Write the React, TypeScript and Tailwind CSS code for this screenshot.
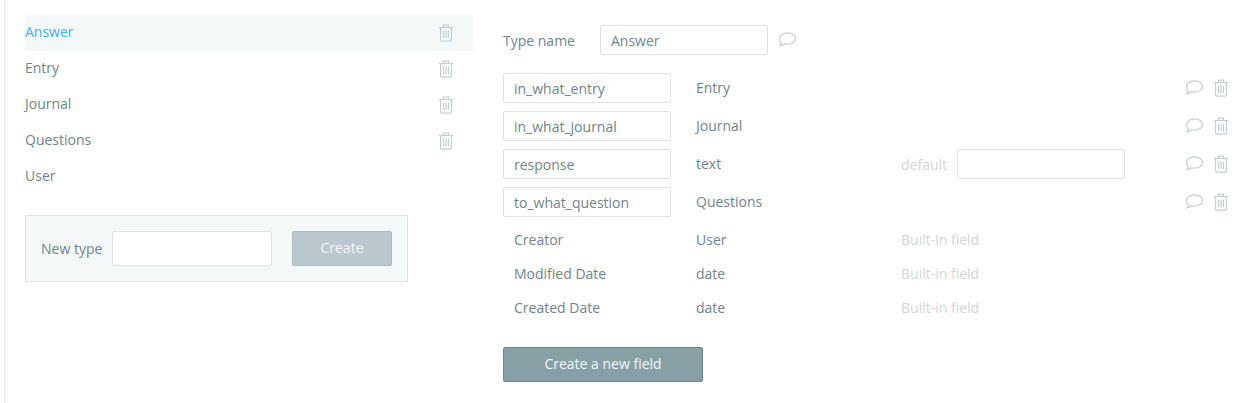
import React from "react";

const TrashIcon = () => (
	<svg width="16" height="18" viewBox="0 0 16 18" fill="none" stroke="#c2d0d5" strokeWidth="1.2" className="block">
		<path d="M1 3.5h14" />
		<path d="M5.5 3.5V1.2h5v2.3" />
		<path d="M2.6 3.5v12.2c0 .9.5 1.4 1.4 1.4h8c.9 0 1.4-.5 1.4-1.4V3.5" />
		<path d="M5.6 6.5v7.5M8 6.5v7.5M10.4 6.5v7.5" />
	</svg>
);

const BubbleIcon = () => (
	<svg width="18" height="16" viewBox="0 0 18 16" fill="none" stroke="#c2d0d5" strokeWidth="1.2" className="block">
		<path d="M9.500 .8c4.400 0 8 2.400 8 5.700s-3.600 5.700-8 5.700c-1 0-2-.1-2.900-.4-1.200 1.100-2.800 1.900-4.700 2.200.7-.8 1.200-1.800 1.300-3.100C1.900 10 1.500 8.300 1.500 6.500c0-3.300 3.600-5.700 8-5.700z" />
	</svg>
);

const FieldInput = ({ value }: { value: string }) => (
	<input
		readOnly
		value={value}
		className="h-[30px] w-[168px] shrink-0 rounded-[2px] border border-[#dde2e4] bg-white px-[10px] text-[14px] text-[#71838a] outline-none"
	/>
);

const types = ["Answer", "Entry", "Journal", "Questions", "User"];

const fields = [
	{ name: "in_what_entry", type: "Entry" },
	{ name: "in_what_journal", type: "Journal" },
	{ name: "response", type: "text", hasDefault: true },
	{ name: "to_what_question", type: "Questions" },
];

const builtIns = [
	{ name: "Creator", type: "User" },
	{ name: "Modified Date", type: "date" },
	{ name: "Created Date", type: "date" },
];

export default function App() {
	return (
		<div className="h-[403px] w-[1255px] overflow-hidden bg-white font-['Open_Sans',sans-serif] text-[14px] text-[#71838a]">
			<div className="ml-[4px] flex h-full border-l border-[#e6e9eb] pl-[20px]">
				<aside className="w-[448px] shrink-0 pt-[15px]">
					{types.map((t, i) => (
						<div
							key={t}
							className={`flex h-[36px] items-center justify-between pr-[19px] ${i === 0 ? "bg-[#f5f8f9] text-[#3fb1e6]" : ""}`}
						>
							<span className="-mt-[4px]">{t}</span>
							{t !== "User" && <TrashIcon />}
						</div>
					))}
					<div className="mt-[20px] flex h-[67px] w-[383px] items-center border border-[#dfe3e5] bg-[#f5f8f9] pl-[15px]">
						<span className="w-[71px]">New type</span>
						<input className="h-[35px] w-[160px] rounded-[2px] border border-[#dfe3e5] bg-white outline-none" />
						<button className="ml-[20px] h-[35px] w-[100px] rounded-[2px] border border-[#aebbc1] bg-[#bac7cc] pb-[2px] text-center text-white/80">
							Create
						</button>
					</div>
				</aside>

				<main className="ml-[30px] flex-1 pt-[25px]">
					<div className="flex items-center">
						<span className="w-[97px]">Type name</span>
						<FieldInput value="Answer" />
						<span className="ml-[10px]">
							<BubbleIcon />
						</span>
					</div>

					<div className="mt-[18px] flex flex-col gap-[8px]">
						{fields.map((f) => (
							<div key={f.name} className="flex h-[30px] items-center">
								<FieldInput value={f.name} />
								<span className="ml-[25px] -mt-[2px] w-[205px] shrink-0">{f.type}</span>
								{f.hasDefault && (
									<>
										<span className="w-[56px] shrink-0 text-[#d0d6d9]">default</span>
										<FieldInput value="" />
									</>
								)}
								<div className="ml-auto mr-[26px] flex items-center gap-[10px]">
									<BubbleIcon />
									<TrashIcon />
								</div>
							</div>
						))}
					</div>

					<div className="mt-[5px]">
						{builtIns.map((b) => (
							<div key={b.name} className="flex h-[34px] items-center">
								<span className="ml-[11px] w-[182px] shrink-0">{b.name}</span>
								<span className="w-[205px] shrink-0">{b.type}</span>
								<span className="text-[#d0d6d9]">Built-in field</span>
							</div>
						))}
					</div>

					<button className="mt-[23px] h-[35px] w-[200px] rounded-[2px] border border-[#6f858d] bg-[#86a0a6] pb-[2px] text-center text-white/90">
						Create a new field
					</button>
				</main>
			</div>
		</div>
	);
}
